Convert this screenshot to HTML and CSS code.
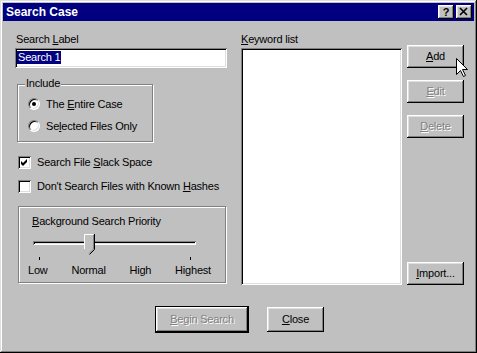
FILE: index.html
```html
<!DOCTYPE html>
<html lang="en">
<head>
  <meta charset="utf-8">
  <title>Search Case</title>
  <link rel="stylesheet" href="styles.css">
</head>
<body>

  <div class="window">
    <div class="titlebar">
      <span class="title">Search Case</span>
      <div class="title-buttons">
        <div class="tbtn">?</div>
        <div class="tbtn">
          <svg width="16" height="14" viewBox="0 0 16 14">
            <path d="M4 3 L11 10 M11 3 L4 10" stroke="#000" stroke-width="1.6" fill="none"/>
          </svg>
        </div>
      </div>
    </div>

    <div class="content">
      <div class="col-left">
        <div class="label indent">Search <u>L</u>abel</div>
        <div class="field textbox"><span class="selected">Search 1</span></div>

        <div class="group include">
          <div class="group-title">Include</div>
          <div class="radio-row first">
            <span class="radio checked"></span>
            <span>The <u>E</u>ntire Case</span>
          </div>
          <div class="radio-row">
            <span class="radio"></span>
            <span>Se<u>l</u>ected Files Only</span>
          </div>
        </div>

        <div class="check-row first">
          <span class="check">
            <svg width="9" height="9" viewBox="0 0 9 9">
              <polygon points="1,3 3,5 7,1 7,4 3,8 1,6" fill="#000"/>
            </svg>
          </span>
          <span>Search File <u>S</u>lack Space</span>
        </div>
        <div class="check-row">
          <span class="check"></span>
          <span>Don't Search Files with Known <u>H</u>ashes</span>
        </div>

        <div class="group priority">
          <div class="prio-label"><u>B</u>ackground Search Priority</div>
          <div class="slider">
            <div class="track"></div>
            <svg class="thumb" width="11" height="21" viewBox="0 0 11 21">
              <path d="M0.5 0.5 H9.5 V15 L5 19.5 L0.5 15 Z" fill="#c0c0c0"/>
              <path d="M0.5 15 V0.5 H9.5" stroke="#fff" fill="none"/>
              <path d="M9.5 1 V15 L5 19.5" stroke="#808080" fill="none"/>
              <path d="M10.5 0 V15.5 L5.5 20.5" stroke="#000" fill="none"/>
            </svg>
          </div>
          <div class="ticks"><span></span><span></span></div>
          <div class="scale">
            <span>Low</span>
            <span>Normal</span>
            <span>High</span>
            <span>Highest</span>
          </div>
        </div>
      </div>

      <div class="col-mid">
        <div class="label"><u>K</u>eyword list</div>
        <div class="field listbox"></div>
      </div>

      <div class="col-right">
        <div class="btn"><u>A</u>dd</div>
        <div class="btn disabled"><u>E</u>dit</div>
        <div class="btn disabled"><u>D</u>elete</div>
        <div class="btn import"><u>I</u>mport...</div>
      </div>
    </div>

    <div class="footer">
      <div class="default-frame">
        <div class="btn wide disabled"><u>B</u>egin Search</div>
      </div>
      <div class="btn tall"><u>C</u>lose</div>
    </div>

    <svg class="cursor" width="13" height="20" viewBox="0 0 13 20">
      <path d="M0.5 0.5 V16.5 L4.5 12.5 L7.5 18.5 L9.5 17.5 L6.5 11.5 H11.5 Z" fill="#fff" stroke="#000"/>
    </svg>
  </div>

</body>
</html>
```

FILE: styles.css
```css
html, body {
  margin: 0;
  padding: 0;
  background: #c0c0c0;
  font-family: 'Liberation Sans', Arial, sans-serif;
  font-size: 11px;
  line-height: 13px;
  letter-spacing: -0.2px;
  color: #000;
}

.window {
  position: relative;
  width: 477px;
  height: 353px;
  box-sizing: border-box;
  padding: 3px;
  background: #c0c0c0;
  box-shadow: inset -1px -1px #000, inset 1px 1px #dfdfdf,
              inset -2px -2px #808080, inset 2px 2px #fff;
  overflow: hidden;
}

.titlebar {
  height: 18px;
  background: #000080;
  display: flex;
  align-items: center;
  justify-content: space-between;
  padding: 0 2px 0 3px;
}

.title {
  color: #fff;
  font-weight: bold;
  font-size: 12px;
  line-height: 18px;
  letter-spacing: 0;
}

.title-buttons {
  display: flex;
  gap: 2px;
}

.tbtn {
  width: 16px;
  height: 14px;
  display: flex;
  align-items: center;
  justify-content: center;
  font-weight: bold;
  font-size: 11px;
  line-height: 14px;
  background: #c0c0c0;
  box-shadow: inset -1px -1px #000, inset 1px 1px #fff,
              inset -2px -2px #808080, inset 2px 2px #dfdfdf;
}

.tbtn svg {
  display: block;
}

u {
  text-decoration: underline;
  text-underline-offset: 1px;
}

.content {
  display: flex;
  padding: 12px 0 0 12px;
}

.col-left {
  width: 212px;
}

.label {
  height: 13px;
}

.label.indent {
  padding-left: 1px;
}

.field {
  background: #fff;
  box-sizing: border-box;
  box-shadow: inset 1px 1px #808080, inset -1px -1px #fff,
              inset 2px 2px #000, inset -2px -2px #dfdfdf;
}

.textbox {
  margin-top: 2px;
  width: 212px;
  height: 20px;
  padding: 3px 2px 0 2px;
}

.selected {
  display: inline-block;
  background: #000080;
  color: #fff;
  padding: 0 1px;
  line-height: 13px;
}

.group {
  box-sizing: border-box;
  border: 1px solid #808080;
  box-shadow: 1px 1px 0 #fff, inset 1px 1px 0 #fff;
}

.include {
  margin: 16px 0 0 2px;
  width: 136px;
  height: 58px;
}

.group-title {
  width: fit-content;
  margin: -8px 0 0 7px;
  padding: 0 1px;
  background: #c0c0c0;
}

.radio-row {
  display: flex;
  align-items: flex-start;
  gap: 6px;
  margin-top: 9px;
  padding-left: 10px;
}

.radio-row.first {
  margin-top: 8px;
}

.radio {
  position: relative;
  width: 12px;
  height: 12px;
  box-sizing: border-box;
  border-radius: 50%;
  background: #fff;
  border: 1px solid;
  border-color: #808080 #fff #fff #808080;
  box-shadow: inset 1px 1px #000, inset -1px -1px #dfdfdf;
}

.radio.checked::after {
  content: "";
  position: absolute;
  left: 3px;
  top: 3px;
  width: 4px;
  height: 4px;
  border-radius: 50%;
  background: #000;
}

.check-row {
  display: flex;
  align-items: flex-start;
  gap: 6px;
  margin: 11px 0 0 3px;
}

.check-row.first {
  margin-top: 14px;
}

.check {
  width: 13px;
  height: 13px;
  box-sizing: border-box;
  padding: 2px;
  background: #fff;
  box-shadow: inset 1px 1px #808080, inset -1px -1px #fff,
              inset 2px 2px #000, inset -2px -2px #dfdfdf;
}

.check svg {
  display: block;
}

.priority {
  margin: 13px 0 0 3px;
  width: 208px;
  height: 77px;
  padding-top: 8px;
}

.prio-label {
  margin-left: 13px;
}

.slider {
  position: relative;
  margin: 6px 0 0 14px;
  width: 163px;
  height: 21px;
}

.track {
  position: relative;
  top: 7px;
  height: 4px;
  box-sizing: border-box;
  box-shadow: inset 1px 1px #808080, inset -1px -1px #fff,
              inset 2px 2px #000, inset -2px -2px #dfdfdf;
}

.thumb {
  position: absolute;
  left: 51px;
  top: 0;
}

.ticks {
  display: flex;
  justify-content: space-between;
  margin: 2px 0 0 20px;
  width: 152px;
  height: 3px;
}

.ticks span {
  width: 1px;
  height: 3px;
  background: #000;
}

.scale {
  display: flex;
  justify-content: space-between;
  margin: 4px 0 0 9px;
  width: 183px;
}

.col-mid {
  margin-left: 14px;
}

.listbox {
  margin-top: 2px;
  width: 161px;
  height: 237px;
}

.col-right {
  display: flex;
  flex-direction: column;
  gap: 12px;
  margin-left: 5px;
  padding-top: 12px;
}

.btn {
  width: 57px;
  height: 23px;
  box-sizing: border-box;
  display: flex;
  align-items: center;
  justify-content: center;
  background: #c0c0c0;
  box-shadow: inset -1px -1px #000, inset 1px 1px #fff,
              inset -2px -2px #808080, inset 2px 2px #dfdfdf;
}

.btn.disabled {
  color: #808080;
  text-shadow: 1px 1px 0 #fff;
}

.btn.import {
  margin-top: auto;
}

.footer {
  display: flex;
  justify-content: center;
  align-items: center;
  gap: 18px;
  margin-top: 21px;
  padding-left: 2px;
}

.default-frame {
  border: 1px solid #000;
}

.btn.wide {
  width: 92px;
  height: 25px;
}

.btn.tall {
  height: 25px;
}

.cursor {
  position: absolute;
  left: 456px;
  top: 58px;
}
```
